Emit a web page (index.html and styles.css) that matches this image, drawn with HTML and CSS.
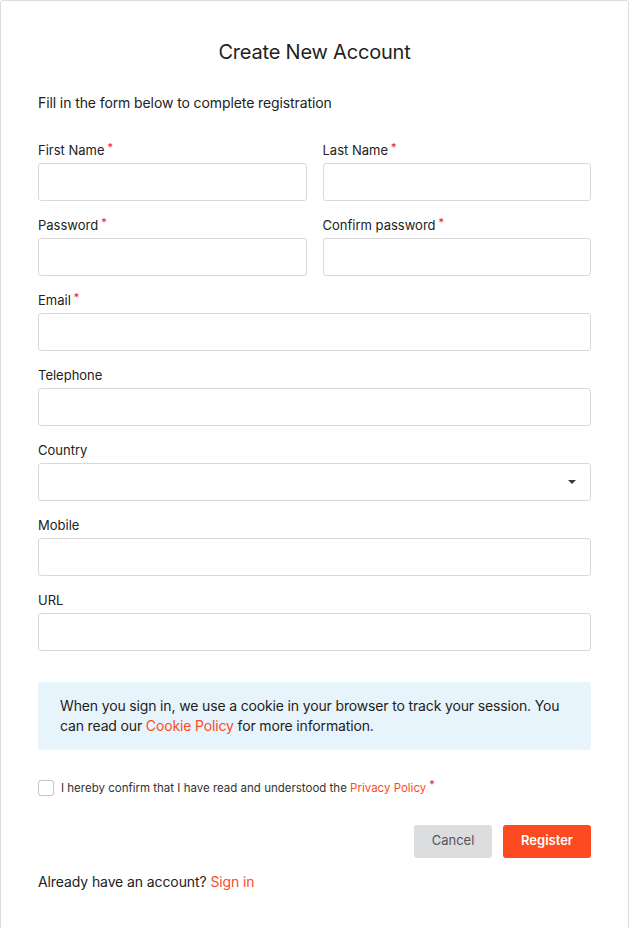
FILE: index.html
```html
<!DOCTYPE html>
<html lang="en">
<head>
<meta charset="utf-8">
<title>Create New Account</title>
<link rel="stylesheet" href="styles.css">
</head>
<body>
<div class="card">
  <h1 class="title">Create New Account</h1>
  <p class="intro">Fill in the form below to complete registration</p>
  <form class="form">
    <div class="row two">
      <div class="field">
        <label class="label">First Name<span class="req">*</span></label>
        <input class="input" type="text">
      </div>
      <div class="field">
        <label class="label">Last Name<span class="req">*</span></label>
        <input class="input" type="text">
      </div>
    </div>
    <div class="row two">
      <div class="field">
        <label class="label">Password<span class="req">*</span></label>
        <input class="input" type="password">
      </div>
      <div class="field">
        <label class="label">Confirm password<span class="req">*</span></label>
        <input class="input" type="password">
      </div>
    </div>
    <div class="field">
      <label class="label">Email<span class="req">*</span></label>
      <input class="input" type="text">
    </div>
    <div class="field">
      <label class="label">Telephone</label>
      <input class="input" type="text">
    </div>
    <div class="field">
      <label class="label">Country</label>
      <div class="select"><span class="caret"></span></div>
    </div>
    <div class="field">
      <label class="label">Mobile</label>
      <input class="input" type="text">
    </div>
    <div class="field">
      <label class="label">URL</label>
      <input class="input" type="text">
    </div>

    <div class="notice">When you sign in, we use a cookie in your browser to track your session. You can read our <a class="link" href="#">Cookie Policy</a> for more information.</div>

    <div class="consent">
      <span class="checkbox"></span>
      <span class="consent-text">I hereby confirm that I have read and understood the <a class="link" href="#">Privacy Policy</a><span class="req">*</span></span>
    </div>

    <div class="actions">
      <button type="button" class="btn btn-cancel">Cancel</button>
      <button type="button" class="btn btn-primary">Register</button>
    </div>
  </form>
  <p class="signin">Already have an account? <a class="link" href="#">Sign in</a></p>
</div>
</body>
</html>
```
FILE: styles.css
```css
html, body {
  margin: 0;
  padding: 0;
  background: #fff;
  overflow: hidden;
}
body {
  font-family: Inter, "Liberation Sans", sans-serif;
  color: #222;
}
.card {
  box-sizing: border-box;
  width: 629px;
  height: 960px;
  border: 1px solid #dcdcdc;
  border-radius: 3px;
  padding: 37px 37px 0 37px;
}
.title {
  margin: 0;
  font-size: 20px;
  line-height: 28px;
  font-weight: 400;
  letter-spacing: -0.2px;
  text-align: center;
  color: #1f1f1f;
}
.intro {
  margin: 27px 0 0;
  font-size: 14px;
  line-height: 20px;
  letter-spacing: -0.1px;
}
.form {
  margin-top: 27px;
  display: flex;
  flex-direction: column;
  gap: 14px;
}
.row.two {
  display: grid;
  grid-template-columns: 1fr 1fr;
  gap: 16px;
}
.field {
  display: flex;
  flex-direction: column;
}
.label {
  font-size: 13px;
  line-height: 20px;
  margin-bottom: 3px;
}
.req {
  color: #e8201a;
  font-size: 11px;
  vertical-align: 4px;
  margin-left: 3px;
  line-height: 0;
}
.input, .select {
  box-sizing: border-box;
  height: 38px;
  width: 100%;
  border: 1px solid #d9d9d9;
  border-radius: 3px;
  background: #fff;
  margin: 0;
  padding: 0 10px;
  font: inherit;
}
.select {
  display: flex;
  align-items: center;
  justify-content: flex-end;
  padding-right: 14px;
}
.caret {
  width: 0;
  height: 0;
  border-left: 4px solid transparent;
  border-right: 4px solid transparent;
  border-top: 4px solid #3a3a3a;
}
.notice {
  margin-top: 17px;
  background: #e8f4fb;
  border-radius: 3px;
  padding: 14px 22px;
  font-size: 14px;
  line-height: 20px;
  letter-spacing: -0.15px;
  color: #1d1d1d;
}
.link {
  color: #fb4b1f;
  text-decoration: none;
}
.consent {
  margin-top: 16px;
  display: flex;
  align-items: center;
  gap: 7px;
}
.checkbox {
  box-sizing: border-box;
  width: 16px;
  height: 16px;
  border: 1px solid #c4c4c4;
  border-radius: 3px;
  background: #fff;
}
.consent-text {
  font-size: 11.5px;
  line-height: 16px;
  color: #333;
}
.actions {
  margin-top: 15px;
  display: flex;
  justify-content: flex-end;
  gap: 11px;
}
.btn {
  height: 33px;
  border: none;
  border-radius: 3px;
  font-family: inherit;
  font-size: 13px;
  line-height: 31px;
  padding: 0 0 2px;
  cursor: pointer;
}
.btn-cancel {
  width: 78px;
  background: #dcdddf;
  color: #555;
}
.btn-primary {
  width: 88px;
  background: #fd4a20;
  color: #fff;
  font-weight: 600;
}
.signin {
  margin: 14px 0 0;
  font-size: 14px;
  line-height: 20px;
  letter-spacing: -0.1px;
}
```
